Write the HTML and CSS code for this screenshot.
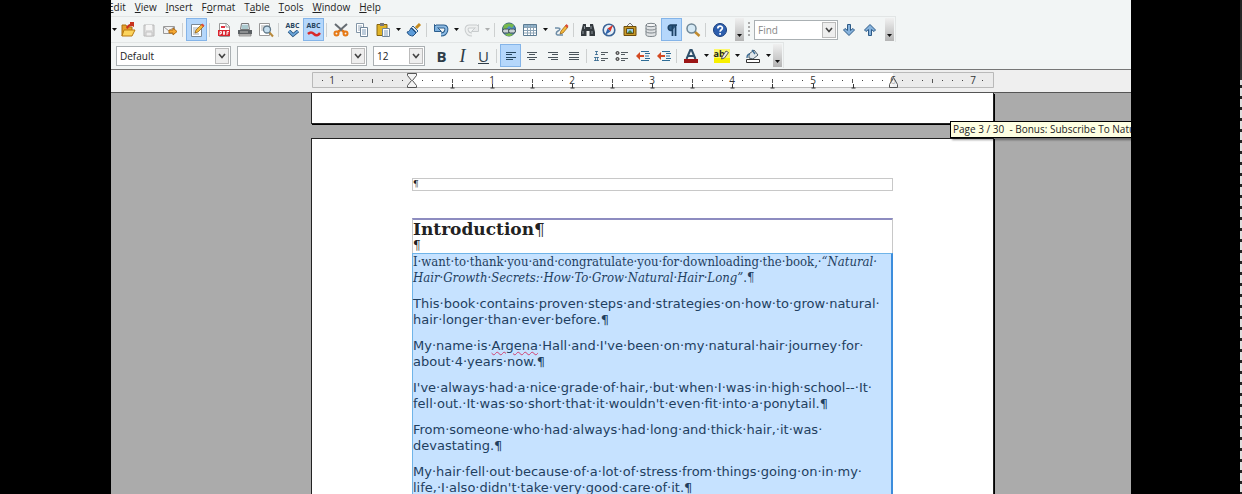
FILE: index.html
```html
<!DOCTYPE html>
<html lang="en">
<head>
<meta charset="UTF-8">
<meta name="viewport" content="width=device-width, initial-scale=1.0">
<title>Writer</title>
<link rel="stylesheet" href="styles.css">
</head>
<body>

<svg class="defs" width="0" height="0" aria-hidden="true">
  <symbol id="chevron" viewBox="0 0 8 8"><path d="M1 2l3 3.500 3-3.500" fill="none" stroke="#444" stroke-width="1.600"/></symbol>
  <symbol id="down" viewBox="0 0 5 3"><path d="M0 0h5L2.500 3z" fill="#111"/></symbol>
</svg>

<main class="app">
  <nav class="menu">
    <a href="#"><u>E</u>dit</a>
    <a href="#"><u>V</u>iew</a>
    <a href="#"><u>I</u>nsert</a>
    <a href="#">F<u>o</u>rmat</a>
    <a href="#">T<u>a</u>ble</a>
    <a href="#"><u>T</u>ools</a>
    <a href="#"><u>W</u>indow</a>
    <a href="#"><u>H</u>elp</a>
  </nav>

  <div class="bar standard">
    <button class="caret" aria-label="New document"><svg width="5" height="3"><use href="#down"/></svg></button>
    <button class="tool" aria-label="Open">
      <svg width="16" height="16" viewBox="0 0 16 16"><path d="M2 14V3h4l1 2h5v3" fill="#e8a02c" stroke="#a8700f"/><path d="M2 14l2-6h11l-3 6z" fill="#fcd45c" stroke="#b97a12"/><path d="M6 6c1-3 3-4 4-4V0h4v5l-2-1c-2 0-4 1-4 3z" fill="#c8321e"/></svg>
    </button>
    <button class="tool" aria-label="Save">
      <svg width="16" height="16" viewBox="0 0 16 16"><path d="M3 3h10v11H3z" fill="#ddd" stroke="#b9b9b9"/><path d="M5 3h6v5H5z" fill="#f6f6f6"/><path d="M5 10h6v4H5z" fill="#efefef" stroke="#c4c4c4"/></svg>
    </button>
    <button class="tool" aria-label="E-mail document">
      <svg width="16" height="16" viewBox="0 0 16 16"><path d="M1.500 4.500h11v7h-11z" fill="#f2f2f2" stroke="#999"/><path d="M2 5l5 4 5-4" fill="none" stroke="#999"/><path d="M7 8h4V6l4 3.500-4 3.500v-2H7z" fill="#f5a933" stroke="#b36c10"/></svg>
    </button>
    <span class="sep"></span>
    <button class="tool on" aria-label="Edit file">
      <svg width="16" height="16" viewBox="0 0 16 16"><path d="M2.500 2.500h10v12h-10z" fill="#fff" stroke="#7d8a96"/><path d="M4 6h6M4 8h4M4 10h3M4 12h6" stroke="#9aa8b5"/><path d="M6 11l1-3 6-6 2 2-6 6z" fill="#f6b93b" stroke="#8a5a10" stroke-width=".7"/><path d="M12 3l1.500-1.500 2 2L14 5z" fill="#dd4b39"/></svg>
    </button>
    <span class="sep"></span>
    <button class="tool" aria-label="Export as PDF">
      <svg width="16" height="16" viewBox="0 0 16 16"><path d="M3.500 1.500h7l3 3v10h-10z" fill="#fff" stroke="#999"/><path d="M10 1v4h4" fill="none" stroke="#999"/><path d="M5 4h4v2H5z" fill="#d34"/><path d="M2 8h12v6H2z" fill="#d9242e"/><path d="M4 13V9.500h1.500v2H4M7.500 9.500v3h1v-3zM11 13V9.500h2M11 11h1.500" fill="none" stroke="#fff" stroke-width=".9"/></svg>
    </button>
    <button class="tool" aria-label="Print">
      <svg width="16" height="16" viewBox="0 0 16 16"><path d="M4.500 1.500h7l1 6h-9z" fill="#dfe9f2" stroke="#777"/><path d="M5 4h6M5 6h6" stroke="#7aa"/><path d="M1 8h14v4H1z" fill="#5b6064"/><path d="M2 12h12v2H2z" fill="#ccc" stroke="#666" stroke-width=".6"/><path d="M3 10h8" stroke="#bbb"/></svg>
    </button>
    <button class="tool" aria-label="Page preview">
      <svg width="16" height="16" viewBox="0 0 16 16"><path d="M1.500 1.500h10v12h-10z" fill="#fff" stroke="#999"/><path d="M3 4h4M3 6h3M3 8h3" stroke="#aaa"/><path d="M11 10l4 4.500" stroke="#b88a3c" stroke-width="2"/><circle cx="9" cy="7.500" r="3.500" fill="#c5dff0" stroke="#607888" stroke-width="1.300"/></svg>
    </button>
    <span class="sep"></span>
    <button class="tool" aria-label="Spelling">
      <span class="abc">ABC</span>
      <svg width="14" height="8" viewBox="0 0 14 8"><path d="M3 1l4 4 5-4" fill="none" stroke="#234f7a" stroke-width="3.500"/><path d="M3 1l4 4 5-4" fill="none" stroke="#6ba6da" stroke-width="1.800"/></svg>
    </button>
    <button class="tool on" aria-label="AutoSpellcheck">
      <span class="abc">ABC</span>
      <svg width="14" height="7" viewBox="0 0 14 7"><path d="M1 4q3-3 6 0t6-1" fill="none" stroke="#d82a2a" stroke-width="2.500"/></svg>
    </button>
    <span class="sep"></span>
    <button class="tool" aria-label="Cut">
      <svg width="16" height="16" viewBox="0 0 16 16"><path d="M2 2l9 8M14 2l-9 8" stroke="#666d73" stroke-width="2"/><path d="M7 8.500L4 10.500M9 8.500l3 2" stroke="#e67a17" stroke-width="2.500"/><circle cx="3.500" cy="11.500" r="2" fill="none" stroke="#e67a17" stroke-width="2"/><circle cx="12.500" cy="11.500" r="2" fill="none" stroke="#e67a17" stroke-width="2"/></svg>
    </button>
    <button class="tool" aria-label="Copy">
      <svg width="16" height="16" viewBox="0 0 16 16"><path d="M2.500 1.500h7v9h-7z" fill="#fff" stroke="#8295a6"/><path d="M4 4h4M4 6h4M4 8h4" stroke="#9ab"/><path d="M6.500 5.500h7v9h-7z" fill="#fff" stroke="#70869a"/><path d="M8 8h4M8 10h4M8 12h4" stroke="#7d9bb8"/></svg>
    </button>
    <button class="tool" aria-label="Paste">
      <svg width="16" height="16" viewBox="0 0 16 16"><path d="M2 2.500h10v11H2z" fill="#e0b428" stroke="#856411"/><path d="M5 1h4v3H5z" fill="#777"/><path d="M7.500 6.500h7v8h-7z" fill="#fff" stroke="#70869a"/><path d="M9 9h4M9 11h4M9 13h4" stroke="#7d9bb8"/></svg>
    </button>
    <button class="caret" aria-label="Paste options"><svg width="5" height="3"><use href="#down"/></svg></button>
    <button class="tool" aria-label="Clone formatting">
      <svg width="16" height="16" viewBox="0 0 16 16"><path d="M10 6l4-4" stroke="#c58a1e" stroke-width="3"/><path d="M7 4l5 5-1.500 1.500-5-5z" fill="#dce8f2" stroke="#31608c"/><path d="M5 6l5 5-3 3c-2 0-5-1-6-4 2 0 3-2 4-4z" fill="#5b9bd8" stroke="#235285"/></svg>
    </button>
    <span class="sep"></span>
    <button class="tool" aria-label="Undo">
      <svg width="16" height="16" viewBox="0 0 16 16"><path d="M3 4.500h8c4 0 3 8-3 8" fill="none" stroke="#2b5d8c" stroke-width="4"/><path d="M1.500 2.500v7h7z" fill="#7db0dd" stroke="#2b5d8c"/><path d="M3 4.500h8c4 0 3 8-3 8" fill="none" stroke="#8dbbe4" stroke-width="2"/></svg>
    </button>
    <button class="caret" aria-label="Undo list"><svg width="5" height="3"><use href="#down"/></svg></button>
    <button class="tool" aria-label="Redo" disabled>
      <svg width="16" height="16" viewBox="0 0 16 16"><path d="M13 4.500H5c-4 0-3 8 3 8" fill="none" stroke="#c8cccd" stroke-width="4"/><path d="M14.500 2.500v7h-7z" fill="#e8eaeb" stroke="#c8cccd"/><path d="M13 4.500H5c-4 0-3 8 3 8" fill="none" stroke="#eef0f0" stroke-width="2"/></svg>
    </button>
    <button class="caret" aria-label="Redo list" disabled><svg width="5" height="3"><use href="#down"/></svg></button>
    <span class="sep"></span>
    <button class="tool" aria-label="Hyperlink">
      <svg width="16" height="16" viewBox="0 0 16 16"><circle cx="8" cy="7.500" r="6.500" fill="#4e8fca" stroke="#2d5b70"/><path d="M3 3c3-2 7-2 10 0l-2 3-3-2-3 3-3 0z" fill="#78b94c"/><path d="M4 12l4-1 4 1-2 2H6z" fill="#78b94c"/><rect x="1.500" y="7" width="7" height="4" rx="2" fill="#c9d2d6" stroke="#42525a"/><rect x="7.500" y="7" width="7" height="4" rx="2" fill="#c9d2d6" stroke="#42525a"/></svg>
    </button>
    <button class="tool" aria-label="Table">
      <svg width="16" height="16" viewBox="0 0 16 16"><path d="M1.500 2.500h13v11h-13z" fill="#fff" stroke="#5c7b92"/><path d="M2 3h12v2H2z" fill="#8fb2cb"/><path d="M2 5.500h12M2 8.500h12M2 11h12M5.500 3v10M8.500 3v10M11.500 3v10" stroke="#8ba3b5"/></svg>
    </button>
    <button class="caret" aria-label="Table size"><svg width="5" height="3"><use href="#down"/></svg></button>
    <button class="tool" aria-label="Show draw functions">
      <svg width="16" height="16" viewBox="0 0 16 16"><path d="M2 6h3c3 0 2 2 0 3s-3 4 1 4h4" fill="none" stroke="#6f8ea8" stroke-width="1.500"/><path d="M7 12l1-3 5-6 2 2-5 6z" fill="#f6b93b" stroke="#8a5a10" stroke-width=".7"/><path d="M12 4l1.500-2 2 2L14 6z" fill="#dd4b39"/></svg>
    </button>
    <span class="sep"></span>
    <button class="tool" aria-label="Find and replace">
      <svg width="16" height="16" viewBox="0 0 16 16"><path d="M3 2h3v3h4V2h3l2 8v4H9.500V9h-3v5H1v-4z" fill="#343a3f"/><path d="M3 9v3M12 9v3M4.500 4v3M11 4v3" stroke="#8b949b"/></svg>
    </button>
    <button class="tool" aria-label="Navigator">
      <svg width="16" height="16" viewBox="0 0 16 16"><circle cx="8" cy="8" r="5.800" fill="#e8f0f8" stroke="#3b6496" stroke-width="1.600"/><path d="M12 3L9.500 9.500l-3-3z" fill="#dd3327"/><path d="M4 13l2.500-6.500 3 3z" fill="#2f65ac"/></svg>
    </button>
    <button class="tool" aria-label="Gallery">
      <svg width="16" height="16" viewBox="0 0 16 16"><path d="M8 1L5 4M8 1l3 3" stroke="#777"/><path d="M2 4.500h12v9H2z" fill="#c89a28" stroke="#6d4c0b"/><path d="M4.500 6.500h7v5h-7z" fill="#9ccbe8" stroke="#6d4c0b"/><path d="M5 11l3-3 2 2 1 1z" fill="#4c7f3a"/></svg>
    </button>
    <button class="tool" aria-label="Data sources">
      <svg width="16" height="16" viewBox="0 0 16 16"><path d="M3 3v10c0 2 10 2 10 0V3z" fill="#dfe2e4" stroke="#7c8489"/><ellipse cx="8" cy="3" rx="5" ry="1.700" fill="#f6f7f8" stroke="#7c8489"/><path d="M3 6.500c0 2 10 2 10 0M3 9.500c0 2 10 2 10 0" fill="none" stroke="#7c8489"/></svg>
    </button>
    <button class="tool on" aria-label="Nonprinting characters">
      <svg width="16" height="16" viewBox="0 0 16 16"><path d="M13 3H6.500a2.800 2.800 0 0 0 0 5.500H8" fill="#2f5d86" stroke="#1d4265" stroke-width="1.500"/><path d="M8.500 3v11M11.500 3v11" stroke="#1d4265" stroke-width="1.800"/></svg>
    </button>
    <button class="tool" aria-label="Zoom">
      <svg width="16" height="16" viewBox="0 0 16 16"><path d="M9.500 9.500l5 4.500" stroke="#c28b2d" stroke-width="2.500"/><circle cx="6.500" cy="6.500" r="4.500" fill="#d5e9f5" stroke="#6f8796" stroke-width="1.500"/></svg>
    </button>
    <span class="sep"></span>
    <button class="tool" aria-label="Help">
      <svg width="16" height="16" viewBox="0 0 16 16"><circle cx="8" cy="8" r="6.500" fill="#2d5fae" stroke="#1a3e7c"/><path d="M5.800 6.500c0-3.200 4.600-3 4.600-.4 0 1.700-2.300 1.600-2.300 3.600M8.100 11v1.700" fill="none" stroke="#fff" stroke-width="1.700"/></svg>
    </button>
    <button class="more" aria-label="More standard tools"><svg width="5" height="3"><use href="#down"/></svg></button>
    <span class="grip"></span>
    <div class="combo find">
      <input type="text" placeholder="Find" aria-label="Find text">
      <svg width="8" height="8"><use href="#chevron"/></svg>
    </div>
    <button class="tool" aria-label="Find next">
      <svg width="14" height="14" viewBox="0 0 14 14"><path d="M5.500 1.500h3v6l2.500-2 1.500 1.500L7 12.500 1.500 7 3 5.500l2.500 2z" fill="#86b2dc" stroke="#2d5a87"/></svg>
    </button>
    <button class="tool" aria-label="Find previous">
      <svg width="14" height="14" viewBox="0 0 14 14"><path d="M5.500 12.500h3v-6l2.500 2 1.500-1.500L7 1.500 1.500 7 3 8.500l2.500-2z" fill="#86b2dc" stroke="#2d5a87"/></svg>
    </button>
    <button class="more" aria-label="More find tools"><svg width="5" height="3"><use href="#down"/></svg></button>
  </div>

  <div class="bar formatting">
    <div class="combo style">
      <select aria-label="Paragraph style"><option>Default</option></select>
      <svg width="8" height="8"><use href="#chevron"/></svg>
    </div>
    <div class="combo face">
      <select aria-label="Font name"><option></option></select>
      <svg width="8" height="8"><use href="#chevron"/></svg>
    </div>
    <div class="combo size">
      <select aria-label="Font size"><option>12</option></select>
      <svg width="8" height="8"><use href="#chevron"/></svg>
    </div>
    <button class="tool letter"><b>B</b></button>
    <button class="tool letter"><i>I</i></button>
    <button class="tool letter"><u>U</u></button>
    <span class="sep"></span>
    <button class="tool on" aria-label="Align left">
      <svg width="12" height="10" viewBox="0 0 12 10"><path d="M1 1.500h10M1 3.500h6M1 6.500h10M1 8.500h7" stroke="#26475f"/></svg>
    </button>
    <button class="tool" aria-label="Center">
      <svg width="12" height="10" viewBox="0 0 12 10"><path d="M1 1.500h10M3 3.500h6M1 6.500h10M3 8.500h6" stroke="#4a545b"/></svg>
    </button>
    <button class="tool" aria-label="Align right">
      <svg width="12" height="10" viewBox="0 0 12 10"><path d="M1 1.500h10M5 3.500h6M1 6.500h10M4 8.500h7" stroke="#4a545b"/></svg>
    </button>
    <button class="tool" aria-label="Justify">
      <svg width="12" height="10" viewBox="0 0 12 10"><path d="M1 1.500h10M1 3.500h10M1 6.500h10M1 8.500h10" stroke="#4a545b"/></svg>
    </button>
    <span class="sep"></span>
    <button class="tool" aria-label="Numbering">
      <svg width="14" height="12" viewBox="0 0 14 12"><path d="M1 1.500h3M2.500 1v4M1 4.500h3M0 7.500h5M1.500 7v4M3.500 7v4M0 10.500h5" stroke="#35688f" stroke-width=".8"/><path d="M7 2.500h7M7 4.500h4M7 8.500h7M7 10.500h4" stroke="#555d62"/></svg>
    </button>
    <button class="tool" aria-label="Bullets">
      <svg width="14" height="12" viewBox="0 0 14 12"><circle cx="2.500" cy="3" r="1.500" fill="#aaa" stroke="#333"/><circle cx="2.500" cy="9" r="1.500" fill="#aaa" stroke="#333"/><path d="M6 2.500h7M6 4.500h4M6 8.500h7M6 10.500h4" stroke="#555d62"/></svg>
    </button>
    <button class="tool" aria-label="Decrease indent">
      <svg width="14" height="12" viewBox="0 0 14 12"><path d="M5 1.500h8M9 3.500h5M9 6h4M9 8.500h5M5 10.500h8" stroke="#2e6d96"/><path d="M0 6l4-4v3h4v2H4v3z" fill="#d34a22"/></svg>
    </button>
    <button class="tool" aria-label="Increase indent">
      <svg width="14" height="12" viewBox="0 0 14 12"><path d="M5 1.500h8M9 3.500h5M9 6h4M9 8.500h5M5 10.500h8" stroke="#2e6d96"/><path d="M0 6l4-4v3h4v2H4v3z" fill="#d34a22"/></svg>
    </button>
    <span class="sep"></span>
    <button class="tool" aria-label="Font color">
      <svg width="14" height="14" viewBox="0 0 14 14"><path d="M2.500 10L6.300 1h1.400l3.800 9M4 7h6" fill="none" stroke="#2f506b" stroke-width="2"/><path d="M0 10h14v4H0z" fill="#9c1616"/></svg>
    </button>
    <button class="caret" aria-label="Font colors"><svg width="5" height="3"><use href="#down"/></svg></button>
    <button class="tool mark" aria-label="Highlighting">
      <span class="ab">ab</span>
      <svg width="16" height="14" viewBox="0 0 16 14"><path d="M8 8l4-6 2.500 1.500-4 5.500-3 1z" fill="#eee" stroke="#555"/></svg>
    </button>
    <button class="caret" aria-label="Highlight colors"><svg width="5" height="3"><use href="#down"/></svg></button>
    <button class="tool" aria-label="Background color">
      <svg width="14" height="14" viewBox="0 0 14 14"><path d="M3 5l5-4 4 5-5 4-4-1z" fill="#dfe6ea" stroke="#4a5a66"/><path d="M4 5c-3 0-3 3-3 4M6 1l3 4" fill="none" stroke="#3c6c94" stroke-width="1.300"/><path d="M.5 10.500h13v3H.5z" fill="#fff" stroke="#333"/></svg>
    </button>
    <button class="caret" aria-label="Background colors"><svg width="5" height="3"><use href="#down"/></svg></button>
    <button class="more" aria-label="More formatting tools"><svg width="5" height="3"><use href="#down"/></svg></button>
  </div>

  <div class="ruler columns">
    <svg class="scale" width="683" height="18" viewBox="0 0 683 18">
      <path d="M1 0h682v16H1z" fill="#ebebeb"/>
      <path d="M101 0h481v16H101z" fill="#fff"/>
      <path d="M1.500.5h681v15H1.500z" fill="none" stroke="#b9b9b9"/>
      <path d="M11 8.500h670" stroke="#444" stroke-dasharray="1 9"/>
      <path d="M61.500 7v4M141.500 7v4M221.500 7v4M301.500 7v4M381.500 7v4M461.500 7v4M541.500 7v4M621.500 7v4" stroke="#555"/>
      <path d="M141.500 12v4m-2 0h4M181.500 12v4m-2 0h4M221.500 12v4m-2 0h4M261.500 12v4m-2 0h4M301.500 12v4m-2 0h4M341.500 12v4m-2 0h4M381.500 12v4m-2 0h4M421.500 12v4m-2 0h4M461.500 12v4m-2 0h4M502.500 12v4m-2 0h4M542.500 12v4m-2 0h4" stroke="#333"/>
      <path d="M16 3h10v9H16zM657 3h10v9h-10z" fill="#ebebeb"/>
      <path d="M176 3h10v9h-10zM256 3h10v9h-10zM336 3h10v9h-10zM416 3h10v9h-10zM497 3h10v9h-10z" fill="#fff"/>
      <g class="inches">
        <text x="21" y="12">1</text>
        <text x="181" y="12">1</text>
        <text x="261" y="12">2</text>
        <text x="341" y="12">3</text>
        <text x="421" y="12">4</text>
        <text x="502" y="12">5</text>
        <text x="582" y="12">6</text>
        <text x="662" y="12">7</text>
      </g>
      <path d="M96.500 1.500h9v2l-4 5 4 5v2h-9v-2l4-5-4-5z" fill="#f4f4f4" stroke="#555"/>
      <path d="M578.500 15.500v-3l4-7 4 7v3z" fill="#f4f4f4" fill-opacity=".7" stroke="#555"/>
    </svg>
  </div>

  <div class="desk columns">
    <section class="page previous"></section>
    <section class="page current">
      <header class="page-header">¶</header>
      <article class="text">
        <h1>Introduction<span class="pilcrow">¶</span></h1>
        <p class="empty">¶</p>
        <div class="selection">
          <p class="lead">I·want·to·thank·you·and·congratulate·you·for·downloading·the·book,·<i>“Natural·<br>Hair·Growth·Secrets:·How·To·Grow·Natural·Hair·Long”</i>.¶</p>
          <p>This·book·contains·proven·steps·and·strategies·on·how·to·grow·natural·<br>hair·longer·than·ever·before.¶</p>
          <p>My·name·is·<span class="misspelt">Argena</span>·Hall·and·I've·been·on·my·natural·hair·journey·for·<br>about·4·years·now.¶</p>
          <p>I've·always·had·a·nice·grade·of·hair,·but·when·I·was·in·high·school--·It·<br>fell·out.·It·was·so·short·that·it·wouldn't·even·fit·into·a·ponytail.¶</p>
          <p>From·someone·who·had·always·had·long·and·thick·hair,·it·was·<br>devastating.¶</p>
          <p>My·hair·fell·out·because·of·a·lot·of·stress·from·things·going·on·in·my·<br>life,·I·also·didn't·take·very·good·care·of·it.¶</p>
        </div>
      </article>
    </section>
    <div class="tooltip" role="tooltip">Page 3 / 30 &nbsp;- Bonus: Subscribe To Natural</div>
  </div>
</main>

</body>
</html>
```

FILE: styles.css
```css
* {
  box-sizing: border-box;
}
body {
  margin: 0;
  height: 100vh;
  overflow: hidden;
  background:
    linear-gradient(#222, #333) right top / 2px 80px no-repeat,
    repeating-linear-gradient(#ddd 0 8px, #222 8px 11px) right / 2px 100% no-repeat #000;
  font-family: "Open Sans", sans-serif;
  font-size: 10px;
  color: #222;
}
.defs {
  position: absolute;
}
.app {
  height: 100%;
  margin: 0 111px;
  display: flex;
  flex-direction: column;
  overflow: hidden;
  background: #f2f5f5;
}
button, input, select {
  font: inherit;
  color: inherit;
}
.menu {
  display: flex;
  gap: 9px;
  height: 16px;
  flex: none;
  margin-left: -3px;
  line-height: 14px;
}
.menu a {
  color: #222;
  text-decoration: none;
}

/* toolbars */
.bar {
  display: flex;
  align-items: center;
  align-self: flex-start;
  height: 26px;
  flex: none;
  border: 1px solid #e2e5e5;
  border-width: 1px 1px 0 0;
  padding-right: 1px;
}
.tool, .caret, .more {
  display: flex;
  flex: none;
  align-items: center;
  justify-content: center;
  height: 23px;
  padding: 0;
  border: 0;
  background: none;
}
.tool {
  width: 21px;
  flex-direction: column;
}
.tool.on {
  background: #b5d7fb;
  border: 1px solid #84b4e8;
}
.caret {
  width: 10px;
}
.standard .caret:first-child {
  width: 6px;
}
.caret:disabled {
  opacity: 0.3;
}
.more {
  width: 9px;
  align-items: flex-end;
  padding-bottom: 4px;
  background: linear-gradient(#f0f0f0, #b4b4b4);
}
.standard .more {
  margin-left: 5px;
}
.sep {
  flex: none;
  width: 1px;
  height: 14px;
  margin: 0 3px 0 2px;
  background: #cdd0d0;
}
.grip {
  width: 2px;
  height: 16px;
  margin: 0 4px;
  background: repeating-linear-gradient(#aaa 0 2px, transparent 2px 4px);
}
.abc {
  font-size: 7px;
  font-weight: bold;
  line-height: 8px;
  color: #26455e;
}
.letter {
  font-size: 15px;
  line-height: 20px;
  color: #2f3d48;
}
.letter i {
  font-family: "Liberation Serif", serif;
  font-size: 18px;
}
.mark {
  display: grid;
  place-content: center;
}
.mark > * {
  grid-area: 1 / 1;
}
.ab {
  height: 14px;
  background: linear-gradient(#fbf76a 9px, #f8f000 9px);
  font-size: 9px;
  font-weight: bold;
  line-height: 9px;
  text-align: left;
}

/* drop-down boxes */
.combo {
  display: grid;
  grid-template-columns: 1fr 14px;
  height: 20px;
  padding: 1px;
  border: 1px solid #aab0b3;
  background: #fff;
}
.combo select, .combo input {
  grid-area: 1 / 1 / 2 / 3;
  min-width: 0;
  height: 16px;
  padding: 0 2px;
  border: 0;
  background: none;
  appearance: none;
}
.combo input::placeholder {
  color: #888;
}
.combo svg {
  grid-area: 1 / 2;
  width: 14px;
  height: 16px;
  padding: 3px 2px;
  border: 1px solid #bbb;
  background: #eee;
  pointer-events: none;
}
.find {
  width: 84px;
}
.formatting .combo {
  margin-right: 6px;
}
.formatting .style {
  width: 115px;
  margin-left: 5px;
}
.face {
  width: 130px;
}
.size {
  width: 52px;
}

/* ruler and pages share the same columns */
.columns {
  display: grid;
  grid-template-columns: 200fr 683px 137fr;
}
.columns > * {
  grid-column: 2;
}
.ruler {
  flex: none;
  height: 24px;
  margin-top: 1px;
  padding-top: 2px;
  border-top: 1px solid #777;
  border-bottom: 1px solid #555;
  background: #efefef;
}
.inches {
  font-size: 10px;
  text-anchor: middle;
  fill: #333;
}
.desk {
  position: relative;
  flex: 1;
  min-height: 0;
  align-content: start;
  background: #ababab;
}
.page {
  border: 1px solid #222;
  background: #fff;
  box-shadow: 1px 1px 0 #000;
}
.previous {
  height: 31px;
  border-top: 0;
  margin-bottom: 14px;
}
.current {
  padding: 39px 100px 0;
}
.page-header {
  height: 13px;
  border: 1px solid #c8c8c8;
  font: 9px/11px "DejaVu Serif", serif;
}
.text {
  margin-top: 27px;
  border: 1px solid #c8c8c8;
  border-top: 2px solid #8d8cc0;
}
.text h1 {
  margin: 0;
  font: bold 17px/19px "DejaVu Serif", serif;
}
.pilcrow {
  font-weight: normal;
}
.text p {
  margin: 0 0 10px;
  white-space: nowrap;
}
.text .empty {
  margin: 0;
  font: 12px/14px "DejaVu Serif", serif;
}
.selection {
  margin: 0 -1px;
  border: 1px solid #6fb4e8;
  border-right: 2px solid #3c8ddc;
  background: #c6e2ff;
  color: #1f3f5f;
  font: 13px/16px "DejaVu Sans", sans-serif;
}
.selection .lead {
  font-family: "DejaVu Serif Condensed", "DejaVu Serif", serif;
}
.misspelt {
  text-decoration: underline wavy #d04070 1px;
}
.tooltip {
  position: absolute;
  grid-column: 1 / -1;
  left: 839px;
  top: 28px;
  height: 17px;
  padding: 0 2px;
  border: 1px solid #000;
  background: #feffe2;
  line-height: 15px;
  white-space: nowrap;
  box-shadow: 2px 2px 2px rgba(0, 0, 0, 0.4);
}
```
